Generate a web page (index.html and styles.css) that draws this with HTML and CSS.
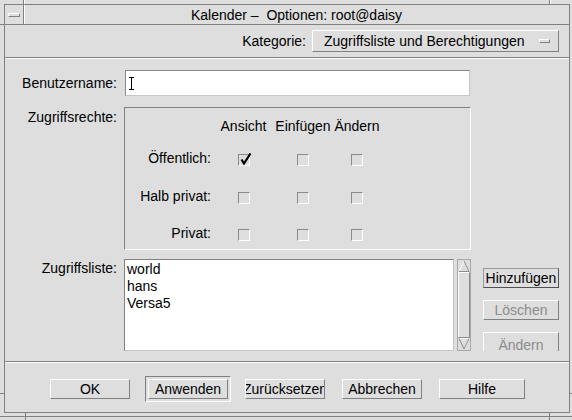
FILE: index.html
```html
<!DOCTYPE html>
<html lang="de">
<head>
<meta charset="utf-8">
<title>Kalender – Optionen</title>
<link rel="stylesheet" href="styles.css">
</head>
<body>
<div class="wm">
  <div class="titlebar">
    <div class="menu-btn"><span class="menu-bar"></span></div>
    <div class="title">Kalender –&nbsp; Optionen: root@daisy</div>
  </div>
  <div class="client">
    <div class="cat">
      <span class="cat-label">Kategorie:</span>
      <div class="dropdown"><span>Zugriffsliste und Berechtigungen</span><span class="ind"></span></div>
    </div>
    <div class="main">
      <div class="row row-user">
        <div class="label label-mid">Benutzername:</div>
        <div class="input">
          <svg class="ibeam" width="7" height="13" viewBox="0 0 7 13"><path d="M1 0.5H6M3.5 0.5V12.5M1 12.5H6" stroke="#000" stroke-width="1" fill="none"/></svg>
        </div>
      </div>
      <div class="row row-rights">
        <div class="label label-top">Zugriffsrechte:</div>
        <div class="rights">
          <div class="cell"></div>
          <div class="cell">Ansicht</div>
          <div class="cell">Einfügen</div>
          <div class="cell">Ändern</div>

          <div class="cell rlabel">Öffentlich:</div>
          <div class="cell"><span class="chk checked"><svg width="14" height="14" viewBox="0 0 14 14"><path d="M2.5 6.5L5 10.5L11.5 0.5" stroke="#000" stroke-width="2.2" fill="none"/></svg></span></div>
          <div class="cell"><span class="chk"></span></div>
          <div class="cell"><span class="chk"></span></div>

          <div class="cell rlabel">Halb privat:</div>
          <div class="cell"><span class="chk"></span></div>
          <div class="cell"><span class="chk"></span></div>
          <div class="cell"><span class="chk"></span></div>

          <div class="cell rlabel">Privat:</div>
          <div class="cell"><span class="chk"></span></div>
          <div class="cell"><span class="chk"></span></div>
          <div class="cell"><span class="chk"></span></div>
        </div>
      </div>
      <div class="row row-list">
        <div class="label label-list">Zugriffsliste:</div>
        <div class="listbox">
          <div>world</div>
          <div>hans</div>
          <div>Versa5</div>
        </div>
        <svg class="scroll" width="14" height="92" viewBox="0 0 14 92">
          <rect x="0.5" y="0.5" width="13" height="91" fill="#dedede" stroke="#a8a8a8"/>
          <path d="M2 12.5L7 2L12 12.5" fill="none" stroke="#ffffff"/>
          <path d="M7 2L12 12.5H2" fill="none" stroke="#8a8a8a"/>
          <path d="M1.5 78.5V13.5H12.5" fill="none" stroke="#ffffff"/>
          <path d="M12.5 13.5V78.5H1.5" fill="none" stroke="#8a8a8a"/>
          <path d="M2 79.5H12L7 90" fill="none" stroke="#ffffff"/>
          <path d="M12 79.5L7 90L2 79.5" fill="none" stroke="#8a8a8a"/>
        </svg>
        <div class="side">
          <div class="btn side-btn focus">Hinzufügen</div>
          <div class="btn side-btn disabled">Löschen</div>
          <div class="btn side-btn disabled tall">Ändern</div>
        </div>
      </div>
    </div>
    <div class="actions">
      <div class="btn">OK</div>
      <div class="default"><div class="btn">Anwenden</div></div>
      <div class="btn">Zurücksetzen</div>
      <div class="btn">Abbrechen</div>
      <div class="btn wide">Hilfe</div>
    </div>
  </div>
</div>
</body>
</html>
```

FILE: styles.css
```css
html, body {
  margin: 0;
  padding: 0;
  background: #dedede;
}

body {
  font-family: "Liberation Sans", Arial, sans-serif;
  font-size: 14px;
  color: #000;
}

.wm {
  width: 572px;
  height: 420px;
  box-sizing: border-box;
  padding: 4px 2px 0 4px;
  background-color: #dedede;
  background-image:
    linear-gradient(#808080, #808080),
    linear-gradient(#808080, #808080),
    linear-gradient(#ffffff, #ffffff),
    linear-gradient(#808080, #808080),
    linear-gradient(#ffffff, #ffffff),
    linear-gradient(#808080, #808080),
    linear-gradient(#808080, #808080),
    linear-gradient(#808080, #808080),
    linear-gradient(#808080, #808080),
    linear-gradient(#808080, #808080);
  background-repeat: no-repeat;
  background-size:
    100% 1px,
    1px 4px,
    1px 4px,
    1px 4px,
    1px 4px,
    1px 7px,
    1px 7px,
    4px 1px,
    4px 1px,
    3px 1px;
  background-position:
    0 416px,
    23px 0,
    24px 0,
    549px 0,
    550px 0,
    25px 413px,
    549px 413px,
    0 24px,
    0 393px,
    569px 393px;
}

/* title bar */
.titlebar {
  display: flex;
  height: 21px;
  box-sizing: border-box;
  border: 1px solid #808080;
}

.menu-btn {
  width: 18px;
  border-right: 1px solid #808080;
  box-shadow: 1px 0 0 #ffffff;
  display: flex;
  align-items: center;
  justify-content: center;
}

.menu-bar {
  display: block;
  width: 12px;
  height: 4px;
  box-sizing: border-box;
  border: 1px solid;
  border-color: #ffffff #808080 #808080 #ffffff;
}

.title {
  flex: 1;
  display: flex;
  align-items: center;
  justify-content: center;
  white-space: pre;
}

/* client area */
.client {
  height: 388px;
  box-sizing: border-box;
  border: 1px solid #808080;
  border-top: none;
  display: flex;
  flex-direction: column;
}

.cat {
  height: 33px;
  box-sizing: border-box;
  border-bottom: 1px solid #808080;
  box-shadow: 0 1px 0 #ffffff;
  display: flex;
  justify-content: flex-end;
  align-items: flex-start;
  padding: 5px 10px 0 0;
  gap: 6px;
}

.cat-label {
  line-height: 22px;
}

.dropdown {
  width: 247px;
  height: 22px;
  box-sizing: border-box;
  border: 1px solid;
  border-color: #ffffff #808080 #808080 #ffffff;
  display: flex;
  align-items: center;
  justify-content: space-between;
  padding: 0 8px 0 11px;
  white-space: nowrap;
}

.ind {
  display: block;
  width: 11px;
  height: 4px;
  box-sizing: border-box;
  border: 1px solid;
  border-color: #ffffff #808080 #808080 #ffffff;
}

.main {
  height: 303px;
  box-sizing: border-box;
  display: flex;
  flex-direction: column;
}

.row {
  display: flex;
  align-items: flex-start;
}

.label {
  width: 119px;
  box-sizing: border-box;
  padding-right: 7px;
  text-align: right;
  flex: none;
  white-space: nowrap;
}

.row-user {
  margin-top: 12px;
  align-items: center;
}

.input {
  margin-left: 1px;
  width: 345px;
  height: 26px;
  box-sizing: border-box;
  border: 1px solid;
  border-color: #888888 #c6c6c6 #c6c6c6 #888888;
  background: #ffffff;
  display: flex;
  align-items: center;
  padding-left: 2px;
}

.ibeam {
  display: block;
}

.row-rights {
  margin-top: 11px;
}

.label-top {
  padding-top: 2px;
  line-height: 16px;
}

.rights {
  width: 347px;
  height: 143px;
  box-sizing: border-box;
  border: 1px solid;
  border-color: #808080 #ffffff #ffffff #808080;
  padding-top: 8px;
  display: grid;
  grid-template-columns: 89px 59px 60px 48px;
  grid-template-rows: 32px 38px 37px 20px;
  align-items: start;
}

.cell {
  height: 20px;
  display: flex;
  align-items: center;
  justify-content: center;
  white-space: nowrap;
}

.rlabel {
  justify-content: flex-end;
  padding-right: 3px;
}

.chk {
  position: relative;
  display: block;
  width: 12px;
  height: 12px;
  box-sizing: border-box;
  border: 1px solid;
  border-color: #8a8a8a #ffffff #ffffff #8a8a8a;
  margin-top: 3px;
}

.chk svg {
  position: absolute;
  left: 0;
  top: -2px;
}

.row-list {
  margin-top: 9px;
}

.label-list {
  line-height: 17px;
  padding-top: 1px;
}

.listbox {
  width: 330px;
  height: 92px;
  box-sizing: border-box;
  border: 1px solid;
  border-color: #808080 #c4c4c4 #c4c4c4 #808080;
  background: #ffffff;
  padding: 1px 2px;
  line-height: 17px;
}

.scroll {
  display: block;
  margin-left: 3px;
  flex: none;
}

.side {
  margin-left: 12px;
  height: 92px;
  box-sizing: border-box;
  padding-top: 9px;
  display: flex;
  flex-direction: column;
  gap: 12px;
  overflow: hidden;
}

.btn {
  width: 80px;
  height: 20px;
  box-sizing: border-box;
  border: 1px solid;
  border-color: #ffffff #808080 #808080 #ffffff;
  display: flex;
  align-items: center;
  justify-content: center;
  white-space: nowrap;
  overflow: hidden;
  flex: none;
}

.side-btn {
  width: 76px;
}

.focus {
  border-color: #9a9a9a #505050 #505050 #9a9a9a;
}

.disabled {
  color: #8c8c8c;
}

.tall {
  height: 26px;
}

.actions {
  flex: 1;
  border-top: 1px solid #808080;
  box-shadow: inset 0 1px 0 #ffffff;
  display: flex;
  align-items: flex-start;
  padding: 17px 0 0 45px;
  gap: 17px;
}

.default {
  padding: 2px;
  border: 1px solid;
  border-color: #808080 #ffffff #ffffff #808080;
  margin: -3px -3px 0 -2px;
}

.wide {
  width: 86px;
}
```
